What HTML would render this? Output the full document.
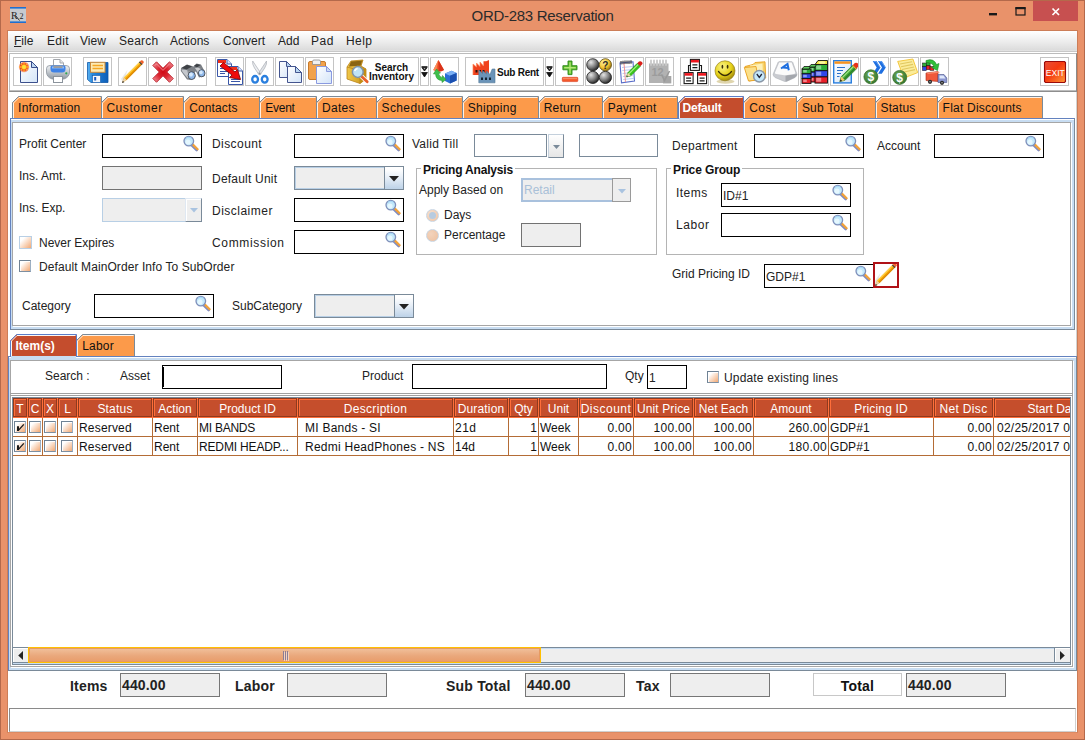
<!DOCTYPE html>
<html lang="en">
<head>
<meta charset="utf-8">
<title>ORD-283 Reservation</title>
<style>
*{box-sizing:border-box;margin:0;padding:0}
html,body{width:1085px;height:740px;overflow:hidden;background:#E9926A}
body{position:relative;font-family:"Liberation Sans",sans-serif;font-size:12px;color:#1a1a1a}
.abs,.abs>*{position:absolute}
#win{position:absolute;left:0;top:0;width:1085px;height:740px;background:#E9926A;border:1px solid #B4694B}
#title{left:0;top:6px;width:1085px;text-align:center;font-size:15px;letter-spacing:-.3px;color:#2b2b2b;white-space:nowrap;line-height:19px}
#appicon{left:10px;top:7px;width:16px;height:16px}
#wc{left:980px;top:1px;width:98px;height:20px}
#client{left:8px;top:31px;width:1069px;height:701px;background:#fff}
#menubar{left:8px;top:31px;width:1069px;height:21px;background:linear-gradient(#fff,#f8f8f8 20%,#ececec 55%,#dcdcdc 94%,#e6e6e6);border-bottom:1px solid #c8c8c8}
#menubar span{position:absolute;top:3px;font-size:12px;color:#222;white-space:nowrap}
#toolbar{left:9px;top:53px;width:1068px;height:39px;background:#fff;border:1px solid #bcbcbc;border-bottom:1px solid #8e8e8e;border-right:1px solid #8a8a8a;box-shadow:inset 0 -1px 0 #bdbdbd}
.tb{top:57px;width:29px;height:29px;border:1px solid #c4c4c4;background:#fff;overflow:hidden}
.tb svg{position:absolute;left:0;top:0}
.tbt{position:absolute;font-weight:bold;font-size:10px;line-height:9px;color:#111;white-space:nowrap}
.tab{white-space:nowrap}
.tab svg{position:absolute;left:0;top:0}
.tab b,.tab i{position:absolute;left:6px;top:5px;font-style:normal;font-weight:normal;font-size:12px;color:#111;letter-spacing:.2px}
.tab b{font-weight:bold;color:#fff;letter-spacing:-.1px}
.lbl{white-space:nowrap;font-size:12px;color:#222;line-height:14px}
.fld{background:#fff;border:1px solid #000;height:24px}
.ft{position:absolute;left:1px;top:5px;font-size:12px;color:#222;line-height:14px}
.dis{background:#eee;border:1px solid #727272;height:24px}
.inset{background:#fff;border:1px solid #8a8a8a;border-right-color:#d8d8d8;border-bottom-color:#d8d8d8}
.mag{position:absolute;right:2px;top:0;width:18px;height:18px}
.panel{border-style:solid;border-width:1px;border-color:#6382BF #7A8A99 #7A8A99 #6382BF;background:#C8DDF2}
.panel::before{content:"";position:absolute;left:0;right:0;top:0;height:1px;background:#fff}
.panel>div{position:absolute;left:1px;top:3px;right:3px;bottom:3px;background:#fff;border:1px solid #a6a6a6;box-shadow:1px 1px 0 #fff}
.cb{width:12px;height:12px;border:1px solid #6f8294;border-right-color:#9db0c4;border-bottom-color:#7d8fa1;background:linear-gradient(135deg,#fff 22%,#f2a873);box-shadow:inset 1px 1px 0 #fff}
.cb.soft{border-color:#b8cfe5;width:13px;height:13px;box-shadow:none}
.cb.tc{position:absolute;width:12px;height:12px;overflow:hidden}
.cb.tc svg{position:absolute;left:0;top:0}
.combo{border:1px solid #7A8A99;background:#eee;box-shadow:inset 0 0 0 1px #b8cfe5}
.combo.off{border:2px solid #a9c1dd;border-right-width:0;box-shadow:none}
.cbtn{position:absolute;right:0;top:0;bottom:0;width:19px;border-left:1px solid #7A8A99;background:linear-gradient(#fff 10%,#e9f0f8 45%,#bdd2e8)}
.combo.off .cbtn{top:-2px;bottom:-2px;border:1px solid #9a9a9a;width:19px;background:#eee}
.ct{position:absolute;left:1px;top:3px;color:#a9c0d8;font-size:12px;line-height:14px}
.grp{border:1px solid #b4b4b4;box-shadow:inset 1px 1px 0 #fff,1px 1px 0 #fff}
.gt{font-weight:bold;font-size:12px;line-height:14px;background:#fff;padding:0 2px;white-space:nowrap;color:#111}
.radio{width:13px;height:13px;border-radius:50%;border:1px solid #c9d6e4;background:radial-gradient(circle at 35% 35%,#f7e0cf,#eec3a3)}
.radio .dot{position:absolute;left:2px;top:2px;width:7px;height:7px;border-radius:50%;background:#b7cbe0}
.radio.r2{background:radial-gradient(circle at 35% 35%,#f3d3bc,#ecc0a0)}
.redbtn{width:26px;height:26px;border:2px solid #b01217;background:#fff;overflow:hidden}
.redbtn svg{position:absolute;left:-3px;top:-3px}
.sp{border:1px solid #7A8A99;background:#fff;overflow:hidden}
.thbg{background:#FF6E3A}
.th{height:19px;background:#C54E2C;border:1px solid #8F3A1E;box-shadow:inset 1px 1px 0 #FF6E3A;color:#fff;font-size:12px;line-height:21px;text-align:center;white-space:nowrap;overflow:hidden}
.tr{height:19px;border-bottom:1px solid #b46c36}
.td{height:19px;line-height:20px;font-size:12px;color:#111;white-space:nowrap;overflow:hidden;border-right:1px solid #b46c36;padding:0 1px}
.sbar{background:#eee;border-top:1px solid #7A8A99;border-bottom:1px solid #c8ddf2;box-shadow:inset 0 -1px 0 #7A8A99,inset 0 1px 0 #c8ddf2}
.sbtn{top:0;width:15px;height:14px;background:#eee;box-shadow:inset 1px 1px 0 #fff}
.sbtn.r{border-left:1px solid #7A8A99;width:16px}
.thumb{top:-1px;height:16px;border:1px solid #FFC000;background:linear-gradient(#f1c29d,#eaa87c 55%,#e89c6a);box-shadow:inset 0 0 0 1px #e79a62}
.blbl{font-weight:bold;font-size:14px;color:#222;white-space:nowrap;line-height:16px;letter-spacing:.2px}
.bf{background:#eee;border:1px solid #767676;height:24px;font-weight:bold;font-size:14px;line-height:22px;padding-left:1px;color:#222;letter-spacing:.15px}
.totl{border:1px solid #c8c8c8;background:#fff;font-weight:bold;font-size:14px;line-height:24px;letter-spacing:.2px;text-align:center;color:#111}
.status{border:1px solid #8a8a8a;border-right-color:#d0d0d0;border-bottom-color:#d0d0d0;background:#fff}
.vt{background:#fff;border:1px solid #7A8A99;box-shadow:inset 1px 1px 0 #fff,1px 1px 0 #fff}
.vtb{border:1px solid #c4d0dc;border-right-color:#7A8A99;border-bottom-color:#7A8A99;background:linear-gradient(#fff,#f2f2f2 50%,#e6e6e6)}
.caret{width:1px;background:#000}
#frame{left:7px;top:30px;width:1071px;height:703px;border:1px solid #cc7d57;border-bottom-color:#dd8a62}
.vline{width:1px;background:#d2d2d2}
.combo.off.v2{border:1px solid #b8cfe5}
.combo.off.v2 .cbtn{top:-1px;bottom:-1px;right:-1px;width:17px;border:1px solid #dfe8f2;border-right-color:#7A8A99;border-bottom-color:#7A8A99;background:#eee;box-shadow:inset 1px 1px 0 #fff}
.combo.off.v2 .cbtn svg{margin:-1px 0 0 -1px}
</style>
</head>
<body>
<div id="win"></div>
<svg width="0" height="0" style="position:absolute"><defs><linearGradient id="gpg" x1="0" y1="0" x2="1" y2="1"><stop offset="0" stop-color="#fff"/><stop offset="1" stop-color="#d3e4f8"/></linearGradient><linearGradient id="gex" x1="0" y1="0" x2="1" y2="1"><stop offset="0" stop-color="#e8503a"/><stop offset=".45" stop-color="#F53A10"/><stop offset="1" stop-color="#FF9A38"/></linearGradient><radialGradient id="gball" cx=".35" cy=".3" r=".75"><stop offset="0" stop-color="#e6e6e6"/><stop offset=".55" stop-color="#808080"/><stop offset="1" stop-color="#1c1c1c"/></radialGradient><radialGradient id="gyb" cx=".35" cy=".3" r=".75"><stop offset="0" stop-color="#fff3a0"/><stop offset=".6" stop-color="#F2C12E"/><stop offset="1" stop-color="#8a6a10"/></radialGradient><radialGradient id="gsm" cx=".38" cy=".3" r=".8"><stop offset="0" stop-color="#fbf58a"/><stop offset=".55" stop-color="#E6D21A"/><stop offset="1" stop-color="#8e7408"/></radialGradient><radialGradient id="gdl" cx=".4" cy=".35" r=".7"><stop offset="0" stop-color="#6aa85a"/><stop offset="1" stop-color="#35752c"/></radialGradient><linearGradient id="gfl" x1="0" y1="0" x2="1" y2="0"><stop offset="0" stop-color="#5db4f2"/><stop offset=".25" stop-color="#2386dc"/><stop offset="1" stop-color="#0f5fb8"/></linearGradient><linearGradient id="gpr" x1="0" y1="0" x2="0" y2="1"><stop offset="0" stop-color="#f2f4f6"/><stop offset="1" stop-color="#8f98a2"/></linearGradient><radialGradient id="grx" cx=".5" cy=".5" r=".6"><stop offset="0" stop-color="#cf0a15"/><stop offset=".45" stop-color="#dc2530"/><stop offset="1" stop-color="#f08088"/></radialGradient><linearGradient id="gbx" x1="0" y1="0" x2="1" y2="0"><stop offset="0" stop-color="#f0c84a"/><stop offset="1" stop-color="#c48f14"/></linearGradient></defs></svg>
<div class="abs">
<div id="appicon"><svg width="16" height="16" viewBox="0 0 16 16"><rect width="16" height="16" fill="#c6cad0"/><rect width="16" height="1.6" fill="#1f6fd0"/><rect y="14.4" width="16" height="1.6" fill="#1f6fd0"/><text x="1" y="11.5" font-family="Liberation Serif, serif" font-size="10" fill="#222">R</text><path d="M5.5 8.5L9.5 13.5" stroke="#222" stroke-width=".9"/><text x="9.5" y="12" font-family="Liberation Serif, serif" font-size="8" fill="#222">2</text></svg></div>
<div id="title">ORD-283 Reservation</div>
<div id="wc"><svg width="98" height="20" viewBox="0 0 98 20"><rect x="53" y="0" width="45" height="20" fill="#C75050"/><rect x="9" y="12" width="8" height="2.4" fill="#1a1a1a"/><rect x="36" y="7" width="9" height="7" fill="none" stroke="#1a1a1a" stroke-width="1.2"/><rect x="35.4" y="6" width="10.2" height="2.2" fill="#1a1a1a"/><path d="M72.5 7.5L79 14M79 7.5L72.5 14" stroke="#fff" stroke-width="1.7"/></svg></div>
<div id="frame"></div>
<div id="client"></div>
<div class="vline" style="left:1076px;top:92px;height:264px"></div>
<div id="menubar" class="abs">
<span style="left:6px"><u>F</u>ile</span><span style="left:39px;letter-spacing:.3px">Edit</span><span style="left:72px">View</span><span style="left:111px;letter-spacing:.25px">Search</span><span style="left:162px">Actions</span><span style="left:215px">Convert</span><span style="left:270px">Add</span><span style="left:303px;letter-spacing:.5px">Pad</span><span style="left:338px;letter-spacing:.4px">Help</span>
</div>
<div id="toolbar"></div>
<div class="tb" style="left:13px"><svg width="27" height="27" viewBox="0 0 27 27"><path d="M6.5 3.5H17.5L23.5 9.5V24.5H6.5Z" fill="url(#gpg)" stroke="#3a4f8c"/><path d="M17.5 3.5V9.5H23.5Z" fill="#bcd6f2" stroke="#3a4f8c" stroke-linejoin="round"/><circle cx="10" cy="9" r="5.2" fill="#F0502A" opacity=".55"/><circle cx="10" cy="9" r="3.9" fill="#F4421E"/><path d="M10 4.2V13.8M5.2 9H14.8M6.6 5.6L13.4 12.4M13.4 5.6L6.6 12.4" stroke="#FFB020" stroke-width="1.3"/><circle cx="10" cy="9" r="2" fill="#FFE23A"/></svg></div>
<div class="tb" style="left:43px"><svg width="27" height="27" viewBox="0 0 27 27"><path d="M9.5 1.5H16L19.5 5V10H9.5Z" fill="#fff" stroke="#a3a7ac"/><path d="M16 1.5V5H19.5" fill="#e4e6e8" stroke="#a3a7ac"/><path d="M2.5 10.5Q2.5 7.5 6 7.5H22Q25.5 7.5 25.5 10.5V14Q25.5 19 20 21H8Q2.5 19 2.5 14Z" fill="url(#gpr)" stroke="#8b939c" stroke-width=".8"/><path d="M6.5 9Q6.5 7.5 8 7.5H20Q21.5 7.5 21.5 9V11Q21.5 14.5 18 14.5H10Q6.5 14.5 6.5 11Z" fill="#3f82e6"/><path d="M8 8.5H20V10.5H8Z" fill="#8ebcf5"/><path d="M9.5 8H18.5V10H9.5Z" fill="#9a9ca0"/><rect x="9.5" y="18.5" width="9" height="6" fill="#fff" stroke="#8b939c"/><circle cx="22.3" cy="15.3" r="1.1" fill="#2fa84f"/></svg></div>
<div class="tb" style="left:83px"><svg width="27" height="27" viewBox="0 0 27 27"><path d="M3.5 4.5H24V24.5H7L3.5 21.5Z" fill="url(#gfl)" stroke="#0f58a8" stroke-width=".8"/><rect x="6.5" y="4.3" width="14.5" height="10" fill="#fdeab4" stroke="#c9893a"/><path d="M8.5 7.5H19M8.5 10.5H19" stroke="#f5a623" stroke-width="1.6"/><rect x="8.5" y="17.5" width="8" height="7" fill="#f4f7fb" stroke="#0f58a8" stroke-width=".6"/><rect x="10.2" y="19" width="2" height="3.5" fill="#1558c0"/></svg></div>
<div class="tb" style="left:118px"><svg width="27" height="27" viewBox="0 0 27 27"><path d="M2 21L8.5 12L4.5 25Z" fill="#ddd" opacity=".7"/><path d="M3 25L5 19.4L20.9 3.5L23.5 6.1L7.6 22Z" fill="#F5A300"/><path d="M5 19.4L20.9 3.5L21.8 4.4L5.9 20.3Z" fill="#FFD24A"/><path d="M6.8 21.2L22.7 5.3L23.5 6.1L7.6 22Z" fill="#D8860A"/><path d="M3 25L5 19.4L7.6 22Z" fill="#EBD2A8"/><path d="M3 25L3.8 22.7L5.3 24.2Z" fill="#333"/><path d="M19.9 4.5L20.9 3.5L23.5 6.1L22.5 7.1Z" fill="#444"/><path d="M20.9 3.5L21.9 2.5Q23.1 1.8 24.2 2.9Q25.3 4 24.5 5.1L23.5 6.1Z" fill="#F2602A"/></svg></div>
<div class="tb" style="left:148px"><svg width="27" height="27" viewBox="0 0 27 27"><path d="M3.8 7.5L7.5 3.8L14 10.3L20.5 3.8L24.3 7.5L17.8 14L24.3 20.5L20.5 24.3L14 17.8L7.5 24.3L3.8 20.5L10.3 14Z" fill="url(#grx)" stroke="#b8232b" stroke-width=".9" stroke-linejoin="round"/><path d="M5.8 7.6L7.5 5.9L14 12.4L20.5 5.9" stroke="#f59aa0" stroke-width="1" fill="none" opacity=".8"/></svg></div>
<div class="tb" style="left:178px"><svg width="27" height="27" viewBox="0 0 27 27"><path d="M2 10L8 6.5L14.5 8.5L17.5 5.5L22 6.5L26 14L25.5 18L20 19.5L17 13.5L15.5 14L16.5 19L12.5 22L8 21.5L1.8 13Z" fill="#7c8086"/><path d="M2.5 10L8 6.8L13 8.5L7.5 11.5Z" fill="#3e4146"/><path d="M15 7.8L17.8 6L21.5 7L18 9.5Z" fill="#3e4146"/><path d="M2.5 11.5L7.5 12L13 15L9 20.5L3.5 14Z" fill="#c4c7cc"/><path d="M16 10L19 9.5L24.5 12.5L20.5 17Z" fill="#caccd0"/><path d="M8 12L13 15L10 19Z" fill="#8e9298"/><ellipse cx="12.7" cy="17.6" rx="3.6" ry="3.9" fill="#8fb8ea" stroke="#484c52" stroke-width=".9"/><ellipse cx="22.7" cy="15.2" rx="3.3" ry="3.6" fill="#8fb8ea" stroke="#484c52" stroke-width=".9"/><ellipse cx="12" cy="16.6" rx="1.9" ry="2.1" fill="#d4e8fb"/><ellipse cx="22" cy="14.3" rx="1.7" ry="1.9" fill="#d4e8fb"/></svg></div>
<div class="tb" style="left:215px"><svg width="27" height="27" viewBox="0 0 27 27"><path d="M1.5 1.5H11L15.5 6V18.5H1.5Z" fill="#fff" stroke="#3a57a8"/><rect x="2" y="2" width="8" height="3" fill="#F0301A"/><path d="M11 1.5V6H15.5" fill="#dbe6f8" stroke="#3a57a8"/><path d="M4 10.5H13M4 13.5H13M4 15.5H9" stroke="#3a57a8"/><path d="M12.5 8.5H22L26.5 13V26.5H12.5Z" fill="#fff" stroke="#3a57a8"/><rect x="13" y="9" width="8" height="3" fill="#F0301A"/><path d="M22 8.5V13H26.5" fill="#dbe6f8" stroke="#3a57a8"/><path d="M15 18.5H24M15 21.5H24M15 23.5H24" stroke="#3a57a8"/><path d="M4 8L7.5 4.5L19 14L21.5 11.5L24.5 21.5L13.5 19.5L16 17Z" fill="#F00A0A" stroke="#7d0b10" stroke-width=".9" stroke-linejoin="round"/></svg></div>
<div class="tb" style="left:245px"><svg width="27" height="27" viewBox="0 0 27 27"><path d="M6.7 3Q6 6 8.5 10L13.2 17L15 15.5Z" fill="#eceef1" stroke="#a9aeb5" stroke-width=".7"/><path d="M20.5 3Q21.2 6 18.7 10L14 17L12.3 15.5Z" fill="#dfe2e6" stroke="#a9aeb5" stroke-width=".7"/><circle cx="13.7" cy="15.5" r=".9" fill="#8a8f96"/><ellipse cx="9.1" cy="21.3" rx="2.9" ry="3.3" fill="#fff" stroke="#2a7fde" stroke-width="2.3"/><ellipse cx="18.7" cy="21.3" rx="2.9" ry="3.3" fill="#fff" stroke="#2a7fde" stroke-width="2.3"/></svg></div>
<div class="tb" style="left:275px"><svg width="27" height="27" viewBox="0 0 27 27"><path d="M3.5 3.5H10.5L15.5 8.5V19.5H3.5Z" fill="url(#gpg)" stroke="#44558f"/><path d="M10.5 3.5V8.5H15.5Z" fill="#b9d7f3" stroke="#44558f" stroke-linejoin="round"/><path d="M11.5 8.5H19.5L25.5 14.5V24.5H11.5Z" fill="url(#gpg)" stroke="#44558f"/><path d="M19.5 8.5V14.5H25.5Z" fill="#b9d7f3" stroke="#44558f" stroke-linejoin="round"/></svg></div>
<div class="tb" style="left:305px"><svg width="27" height="27" viewBox="0 0 27 27"><rect x="2.5" y="3.5" width="17" height="18" rx="1.5" fill="#F2A24C" stroke="#C77A2A"/><path d="M6.5 6.5V3.5Q6.5 2 8 2H13Q14.5 2 14.5 3.5V6.5Z" fill="#f0f0f0" stroke="#8d8d8d" stroke-width=".8"/><path d="M10.5 8.5H20.5L25.5 13.5V25.5H10.5Z" fill="url(#gpg)" stroke="#8a9ae0"/><path d="M20.5 8.5V13.5H25.5Z" fill="#c9dcf6" stroke="#8a9ae0" stroke-linejoin="round"/></svg></div>
<div class="tb" style="left:430px"><svg width="27" height="27" viewBox="0 0 27 27"><path d="M7.4 2L13 12Q7.6 15 2.3 12Z" fill="#F25A2A"/><path d="M7.4 2L13 12Q10.3 13.6 7.6 13.6Z" fill="#D9321A"/><path d="M7.4 2L2.3 12Q3.5 12.8 5 13.2Z" fill="#F98A58"/><path d="M14 15.5L20.5 12.8L25.6 15V22.5L19 25.4L14 23Z" fill="#2a6fd6"/><path d="M14 15.5L20.5 12.8L25.6 15L19 17.8Z" fill="#7ab0f5"/><path d="M19 17.8V25.4L25.6 22.5V15Z" fill="#1a50b0"/><path d="M5.5 11L9.5 15L7.5 15.5Q8.5 19.5 11.5 19.5V17.5L15 21.5L11 24.5V22.5Q5 22.5 4.5 15.8L2.5 16Z" fill="#3FC04A" stroke="#279532" stroke-width=".6" stroke-linejoin="round"/></svg></div>
<div class="tb" style="left:555px"><svg width="27" height="27" viewBox="0 0 27 27"><path d="M12 3H16V7.7H21V11.8H16V16.6H12V11.8H6.9V7.7H12Z" fill="#58b82a" stroke="#2f8a1b" stroke-width=".9"/><path d="M13.3 4.2H14.7V9H19.8V10.5H14.7V15.4H13.3V10.5H8.2V9H13.3Z" fill="#b4e878"/><rect x="6.3" y="19.3" width="15.5" height="4.3" rx=".8" fill="#F4572A" stroke="#d83a1a" stroke-width=".6"/><rect x="7" y="19.8" width="14" height="1.4" fill="#f98a62"/></svg></div>
<div class="tb" style="left:585px"><svg width="27" height="27" viewBox="0 0 27 27"><circle cx="6.8" cy="6.8" r="6.1" fill="url(#gball)" stroke="#1a1a1a" stroke-width=".8"/><circle cx="6.8" cy="19.4" r="6.1" fill="url(#gball)" stroke="#1a1a1a" stroke-width=".8"/><circle cx="19.4" cy="19.4" r="6.1" fill="url(#gball)" stroke="#1a1a1a" stroke-width=".8"/><circle cx="19.4" cy="6.8" r="6.1" fill="url(#gyb)" stroke="#5a4608" stroke-width=".8"/><text x="19.4" y="10.5" text-anchor="middle" font-family="Liberation Sans, sans-serif" font-weight="bold" font-size="10" fill="#2a2a2a">?</text></svg></div>
<div class="tb" style="left:615px"><svg width="27" height="27" viewBox="0 0 27 27"><path d="M4 5L17 3.8L18.5 23L5.5 24.8Z" fill="#fff" stroke="#5a6ec8" stroke-width="1.1"/><path d="M6 9.5L17 8.5M6.3 12.5L17.3 11.5M6.6 15.5L17.6 14.5M6.9 18.5L17.9 17.5M7.2 21.5L18 20.4" stroke="#b4c4f0" stroke-width=".9"/><path d="M8 5L9.5 24" stroke="#f08a8a" stroke-width=".9"/><path d="M5 3V6.5M7 2.8V6.3M9 2.6V6.1M11 2.5V6M13 2.4V5.9M15 2.3V5.8" stroke="#333" stroke-width="1.1"/><path d="M10.5 19L11.8 14.8L21.3 5.3L24.3 8.3L14.8 17.8Z" fill="#3ac81a" stroke="#1f8a10" stroke-width=".7"/><path d="M12.8 15.8L22.3 6.3" stroke="#a8f088" stroke-width="1.2"/><path d="M21.3 5.3L23 3.6Q24.6 2.6 25.9 3.9Q27.2 5.2 26 6.6L24.3 8.3Z" fill="#d8201a"/><path d="M10.5 19L11.8 14.8L14.8 17.8Z" fill="#F2D9A8"/><path d="M10.5 19L11 17.3L12.2 18.5Z" fill="#333"/></svg></div>
<div class="tb" style="left:645px"><svg width="27" height="27" viewBox="0 0 27 27"><path d="M3 5.5H22.5V22L19 25H3Z" fill="#b2b2b2"/><path d="M17 18H25.3V25.4H17Z" fill="#a6a6a6"/><path d="M5 2.5V7M8 2.5V7M11 2.5V7M14 2.5V7M17 2.5V7M20 2.5V7" stroke="#c9c9c9" stroke-width="1.8" stroke-linecap="round"/><text x="11.5" y="18" text-anchor="middle" font-family="Liberation Sans, sans-serif" font-weight="bold" font-size="11" fill="#9c9c9c">12</text><path d="M15.5 16.5L18.5 22.5L23.5 13" fill="none" stroke="#999" stroke-width="1.6"/></svg></div>
<div class="tb" style="left:680px"><svg width="27" height="27" viewBox="0 0 27 27"><path d="M9.5 7.5H7.5V14.5M18.5 7.5H20.5V14.5" fill="none" stroke="#1a1a1a" stroke-width="1.1"/><rect x="9.4" y="1.4" width="9" height="11" fill="#fff" stroke="#1a1a1a" stroke-width="1.1"/><rect x="9.9" y="1.9" width="8" height="2.6" fill="#F0141C"/><path d="M11.4 6.9H16.4M11.4 9.6H16.4" stroke="#1a1a1a" stroke-width="1.2"/><rect x="3.1" y="14.6" width="9" height="11" fill="#fff" stroke="#1a1a1a" stroke-width="1.1"/><rect x="3.6" y="15.1" width="8" height="2.6" fill="#F0141C"/><path d="M5.1 20.1H10.1M5.1 22.799999999999997H10.1" stroke="#1a1a1a" stroke-width="1.2"/><rect x="16.6" y="14.6" width="9" height="11" fill="#fff" stroke="#1a1a1a" stroke-width="1.1"/><rect x="17.1" y="15.1" width="8" height="2.6" fill="#F0141C"/><path d="M18.6 20.1H23.6M18.6 22.799999999999997H23.6" stroke="#1a1a1a" stroke-width="1.2"/></svg></div>
<div class="tb" style="left:710px"><svg width="27" height="27" viewBox="0 0 27 27"><ellipse cx="14.5" cy="23.5" rx="9" ry="2.2" fill="#b9a24a" opacity=".45"/><circle cx="14" cy="12.8" r="10" fill="url(#gsm)" stroke="#8a7408" stroke-width=".6"/><ellipse cx="11.4" cy="8.7" rx=".9" ry="2" fill="#3a2e06"/><ellipse cx="16.6" cy="8.7" rx=".9" ry="2" fill="#3a2e06"/><path d="M7.5 13.5Q14 21.5 20.5 13.5" fill="none" stroke="#3a2e06" stroke-width="1.3" stroke-linecap="round"/></svg></div>
<div class="tb" style="left:740px"><svg width="27" height="27" viewBox="0 0 27 27"><path d="M4 8.5L12 6.5L14 4.5L24 3.8L24.7 20L8 23Z" fill="#F7D268" stroke="#E8A020" stroke-width=".9" stroke-linejoin="round"/><path d="M9 7.5L21.5 5.5L22 19L10.5 21Z" fill="#fdf0b8"/><path d="M3.3 9.5L15 8.5L17.5 22L7.5 23Z" fill="#FBE08A" stroke="#E8A020" stroke-width=".9" stroke-linejoin="round"/><circle cx="18.3" cy="18.2" r="5.7" fill="#c4e8fb" stroke="#8a98a8" stroke-width="1.5"/><path d="M15.8 16L18.3 19.3L20.8 16" fill="none" stroke="#223" stroke-width="1.3"/></svg></div>
<div class="tb" style="left:770px"><svg width="27" height="27" viewBox="0 0 27 27"><path d="M2.100 16.200L7 4.500Q7.500 3.600 8.500 3.600H20.300Q21.300 3.600 21.800 4.500L26 16.200Q26 18 24 19.500L16 23.200Q14.500 23.800 13 23.200L4 19.500Q2.100 18 2.100 16.200Z" fill="#c9cbd0" stroke="#b0b3b9" stroke-width=".6"/><path d="M14.500 17.500L26 16.200Q26 18 24 19.500L16 23.200Q15 23.600 14.500 23.600Z" fill="#a4a7ad"/><path d="M8.200 4.600H20.600L24.300 14.500Q24.500 15.800 23 16L15 17.300Q14.200 17.400 13.400 17.300L5 16Q3.600 15.800 4 14.500Z" fill="#fbfbfb"/><path d="M10 10.500L16.500 6L17.800 12.300M12 9.600L17.300 10" fill="none" stroke="#1F6FE0" stroke-width="2"/></svg></div>
<div class="tb" style="left:800px"><svg width="27" height="27" viewBox="0 0 27 27"><rect x="8" y="9" width="8" height="5" fill="#2EAE3A" stroke="#111" stroke-width=".9"/><rect x="9.2" y="10" width="3.2" height="2.6" fill="#fff" opacity=".45"/><rect x="8" y="14" width="8" height="5" fill="#2F46E8" stroke="#111" stroke-width=".9"/><rect x="9.2" y="15" width="3.2" height="2.6" fill="#fff" opacity=".45"/><rect x="8" y="19" width="8" height="5" fill="#E8202A" stroke="#111" stroke-width=".9"/><rect x="9.2" y="20" width="3.2" height="2.6" fill="#fff" opacity=".45"/><rect x="1" y="11.0" width="9" height="4.8" fill="#2EAE3A" stroke="#111" stroke-width=".9"/><rect x="2.2" y="12.0" width="3.6" height="2.4" fill="#fff" opacity=".45"/><rect x="1" y="15.8" width="9" height="4.8" fill="#2F46E8" stroke="#111" stroke-width=".9"/><rect x="2.2" y="16.8" width="3.6" height="2.4" fill="#fff" opacity=".45"/><rect x="1" y="20.6" width="9" height="4.8" fill="#E8202A" stroke="#111" stroke-width=".9"/><rect x="2.2" y="21.6" width="3.6" height="2.4" fill="#fff" opacity=".45"/><rect x="14" y="6.5" width="12.5" height="6.2" fill="#2EAE3A" stroke="#111" stroke-width=".9"/><rect x="15.2" y="7.5" width="5.0" height="3.8000000000000003" fill="#fff" opacity=".45"/><rect x="14" y="12.7" width="12.5" height="6.2" fill="#2F46E8" stroke="#111" stroke-width=".9"/><rect x="15.2" y="13.7" width="5.0" height="3.8000000000000003" fill="#fff" opacity=".45"/><rect x="14" y="18.9" width="12.5" height="6.2" fill="#E8202A" stroke="#111" stroke-width=".9"/><rect x="15.2" y="19.9" width="5.0" height="3.8000000000000003" fill="#fff" opacity=".45"/><path d="M14 6.5L17 2.5H26.5V6.5Z" fill="#F0E23A" stroke="#111" stroke-width=".9"/><ellipse cx="21" cy="4.5" rx="3.5" ry="1.3" fill="#fbf7a8"/><path d="M1 11L3 8.5H10L8 11Z" fill="#5acc5a" stroke="#111" stroke-width=".8"/><path d="M8 9L10 6.5H15.5L14 9Z" fill="#5acc5a" stroke="#111" stroke-width=".8"/></svg></div>
<div class="tb" style="left:830px"><svg width="27" height="27" viewBox="0 0 27 27"><rect x="2.7" y="2.7" width="17.6" height="22.2" fill="url(#gpg)" stroke="#2a7fde" stroke-width="1.4"/><rect x="3.4" y="3.4" width="16.2" height="2.4" fill="#F7931E"/><path d="M6 9.5H14M6 12.5H12M6 15.5H10M6 18.5H8.5" stroke="#2a6fc8" stroke-width="1.1"/><path d="M8.8 23.6L10.3 18.6L22 6.9L25.7 10.6L14 22.3Z" fill="#3fae3a" stroke="#1f6a1c" stroke-width=".7"/><path d="M11.3 19.6L23 7.9" stroke="#a8e088" stroke-width="1.2"/><path d="M13 21.3L24.7 9.6" stroke="#2a7a26" stroke-width="1.2"/><path d="M8.8 23.6L10.3 18.6L14 22.3Z" fill="#F2C86a"/><path d="M8.8 23.6L9.5 21.3L11.2 22.9Z" fill="#222"/><path d="M21.2 7.7L22 6.9L25.7 10.6L24.9 11.4Z" fill="#F2A02A"/><path d="M22 6.9L23.8 5.1Q25.5 4 27 5.5Q28 7 27.2 8.5L25.7 10.6Z" fill="#E8301A"/></svg></div>
<div class="tb" style="left:860px"><svg width="27" height="27" viewBox="0 0 27 27"><path d="M11.7 3H15.5L19.5 9.4L15.5 15.8H11.7L15.7 9.4Z" fill="#1F6FE0"/><path d="M17 3H20.8L24.8 9.4L20.8 15.8H17L21 9.4Z" fill="#1F6FE0"/><path d="M12.6 3.5H15.2L19 9.4" stroke="#6aa8f8" stroke-width=".8" fill="none"/><path d="M17.9 3.5H20.5L24.3 9.4" stroke="#6aa8f8" stroke-width=".8" fill="none"/><circle cx="9.9" cy="18.8" r="7" fill="url(#gdl)" stroke="#2f6a27" stroke-width=".7"/><text x="9.9" y="23.1" text-anchor="middle" font-family="Liberation Sans, sans-serif" font-weight="bold" font-size="12" fill="#fff">$</text></svg></div>
<div class="tb" style="left:890px"><svg width="27" height="27" viewBox="0 0 27 27"><path d="M6.7 3.4L21.9 1L26.7 14.6L12.9 20Z" fill="#FBEC9A" stroke="#F2C230" stroke-width=".9" stroke-linejoin="round"/><path d="M9 6L21 3.8M10 8.8L22 6.4M11 11.5L23 9M12 14.2L24 11.6" stroke="#e0c860" stroke-width="1.1"/><circle cx="8.7" cy="19.4" r="7" fill="url(#gdl)" stroke="#2f6a27" stroke-width=".7"/><text x="8.7" y="23.7" text-anchor="middle" font-family="Liberation Sans, sans-serif" font-weight="bold" font-size="12" fill="#fff">$</text></svg></div>
<div class="tb" style="left:920px"><svg width="27" height="27" viewBox="0 0 27 27"><rect x="1.5" y="5" width="3.8" height="3.8" fill="#2EAE3A" stroke="#111" stroke-width=".5"/><rect x="5.3" y="4" width="3.8" height="3.8" fill="#2EAE3A" stroke="#111" stroke-width=".5"/><rect x="1.5" y="8.8" width="3.8" height="3.8" fill="#2F46E8" stroke="#111" stroke-width=".5"/><rect x="5.3" y="7.8" width="3.8" height="3.8" fill="#E8202A" stroke="#111" stroke-width=".5"/><rect x="9" y="8.5" width="3.8" height="3.8" fill="#E8202A" stroke="#111" stroke-width=".5"/><ellipse cx="9" cy="3.5" rx="3" ry="1.3" fill="#F0E23A" stroke="#111" stroke-width=".5"/><path d="M5 2.5Q13 0 15.5 6.5L18 5.5L16.5 12.5L10.5 9.5L13 8.5Q11.5 4.5 5 4.5Z" fill="#2fc03a" stroke="#1f8a28" stroke-width=".6" stroke-linejoin="round"/><path d="M5 15L17 13.5V23.5L5 22.5Z" fill="#F0583A" stroke="#a82a18" stroke-width=".6"/><path d="M5 15L17 13.5L19 14.5L7.5 16Z" fill="#f98a6a"/><path d="M17 16.5H23L25.8 20V24.5H17Z" fill="#8a96d0" stroke="#4a5288" stroke-width=".6"/><path d="M18.5 17.5H22.5L24.5 20.5H18.5Z" fill="#dfe8fa"/><circle cx="9" cy="23.8" r="2.1" fill="#2a2a2a"/><circle cx="21" cy="24.8" r="2.1" fill="#2a2a2a"/><circle cx="9" cy="23.8" r=".8" fill="#aaa"/><circle cx="21" cy="24.8" r=".8" fill="#aaa"/></svg></div>
<div class="tb" style="left:1040px"><svg width="27" height="27" viewBox="0 0 27 27"><path d="M4.5 3.5H23.5L24.5 4.5V23.5L23.5 24.5H4.5L3.5 23.5V4.5Z" fill="url(#gex)" stroke="#9a0a0a" stroke-width="1.1"/><text x="14.3" y="17.9" text-anchor="middle" font-family="Liberation Sans, sans-serif" font-size="9.5" fill="#fff" textLength="19" lengthAdjust="spacingAndGlyphs">EXIT</text></svg></div>
<div class="tb" style="left:340px;width:79px"><svg width="29" height="27" viewBox="0 0 29 27"><path d="M6 9L10 3L22 2L20 8L25 11V21L19 25.5L6 21Z" fill="url(#gbx)" stroke="#b98218" stroke-width=".8" stroke-linejoin="round"/><path d="M6 9L19 12.5L25 11" fill="none" stroke="#b98218" stroke-width=".8"/><path d="M19 12.5V25.5" stroke="#b98218" stroke-width=".8"/><path d="M10 3.5L21 2.7L19.5 7.5L8 8.5Z" fill="#8a6412"/><path d="M19 12.5L25 11V21L19 25.5Z" fill="#c48f14"/><path d="M20.6 18.4L26.4 24" stroke="#fff" stroke-width="4.4" stroke-linecap="round"/><path d="M20.6 18.4L26.2 23.8" stroke="#E8602A" stroke-width="2.8" stroke-linecap="round"/><circle cx="16.8" cy="14" r="5.4" fill="#BFE3F7" stroke="#7f93a8" stroke-width="1.5"/><path d="M13.7 13A3.5 3.5 0 0 1 16.6 10.4" stroke="#fff" stroke-width="1.5" fill="none"/></svg><span class="tbt" style="left:27px;top:5px;width:47px;text-align:center">Search<br>Inventory</span></div>
<div class="tb" style="left:420px;width:9px"><svg width="7" height="27" viewBox="0 0 7 27"><path d="M0.5 8.5H6.5M0.8 9.5H6.2L3.5 13Z M0.6 14.5H6.4L3.5 19Z" fill="#111" stroke="#111" stroke-width=".8"/><path d="M2.5 10.2H4.5L3.5 11.6Z" fill="#ddd"/></svg></div>
<div class="tb" style="left:465px;width:79px"><svg width="30" height="27" viewBox="0 0 30 27"><path d="M7 17V6L10.5 9V5L14 8.5V4L17.5 8V3.2H20.2L23 2V17Z" fill="#F0421E"/><path d="M7 17V6L10.5 9V5L14 8.5V4L17.5 8" fill="none" stroke="#ff8a5a" stroke-width=".7"/><path d="M9.5 12H11.5V14.5H9.5ZM13 12H15V14.5H13ZM16.5 12H18.5V14.5H16.5Z" fill="#301008"/><path d="M12.8 24.8V12L16.5 15.5V12.5L20.5 16V13L24 16.5L26.2 11H29V24.8Z" fill="#6a93b8" stroke="#4f7596" stroke-width=".6"/><path d="M15 19.5H17V22H15ZM19 19.5H21V22H19ZM23 19.5H25V22H23Z" fill="#142434"/></svg><span class="tbt" style="left:31px;top:10px;letter-spacing:-.25px">Sub Rent</span></div>
<div class="tb" style="left:545px;width:9px"><svg width="7" height="27" viewBox="0 0 7 27"><path d="M0.5 8.5H6.5M0.8 9.5H6.2L3.5 13Z M0.6 14.5H6.4L3.5 19Z" fill="#111" stroke="#111" stroke-width=".8"/><path d="M2.5 10.2H4.5L3.5 11.6Z" fill="#ddd"/></svg></div>
<div class="panel abs" style="left:10px;top:118px;width:1065px;height:212px"><div></div></div>
<div class="lbl" style="left:19px;top:137px">Profit Center</div>
<div class="fld" style="left:102px;top:134px;width:100px;height:24px"><svg class="mag" viewBox="0 0 18 18"><path d="M10.8 10.3L15.7 15.2" stroke="#7f8cc2" stroke-width="2.6" stroke-linecap="round"/><path d="M11.9 9.6L16.6 14.3" stroke="#F2A23A" stroke-width="2.2" stroke-linecap="round"/><circle cx="7.8" cy="6.1" r="4.8" fill="#c2e8fa" stroke="#7f90bb" stroke-width="1.3"/><circle cx="7" cy="7" r="2.6" fill="#eefaff" opacity=".8"/><path d="M5 3.4A4 4 0 0 1 10.8 3.6" stroke="#a5d6f5" stroke-width="1.2" fill="none"/></svg></div>
<div class="lbl" style="left:19px;top:169px;letter-spacing:0.007px">Ins. Amt.</div>
<div class="dis" style="left:102px;top:166px;width:100px;height:24px"></div>
<div class="lbl" style="left:19px;top:201px;letter-spacing:-0.036px">Ins. Exp.</div>
<div class="combo off v2" style="left:102px;top:198px;width:100px;height:24px"><div class="cbtn"><svg width="8" height="5" viewBox="0 0 8 5" style="position:absolute;left:5px;top:10px"><path d="M0 0H8L4 4.5Z" fill="#a9c3e0"/></svg></div></div>
<div class="cb soft" style="left:19px;top:236px"></div>
<div class="lbl" style="left:39px;top:236px">Never Expires</div>
<div class="cb " style="left:19px;top:260px"></div>
<div class="lbl" style="left:39px;top:260px;letter-spacing:0.086px">Default MainOrder Info To SubOrder</div>
<div class="lbl" style="left:22px;top:299px">Category</div>
<div class="fld" style="left:94px;top:294px;width:120px;height:24px"><svg class="mag" viewBox="0 0 18 18"><path d="M10.8 10.3L15.7 15.2" stroke="#7f8cc2" stroke-width="2.6" stroke-linecap="round"/><path d="M11.9 9.6L16.6 14.3" stroke="#F2A23A" stroke-width="2.2" stroke-linecap="round"/><circle cx="7.8" cy="6.1" r="4.8" fill="#c2e8fa" stroke="#7f90bb" stroke-width="1.3"/><circle cx="7" cy="7" r="2.6" fill="#eefaff" opacity=".8"/><path d="M5 3.4A4 4 0 0 1 10.8 3.6" stroke="#a5d6f5" stroke-width="1.2" fill="none"/></svg></div>
<div class="lbl" style="left:212px;top:137px;letter-spacing:0.430px">Discount</div>
<div class="fld" style="left:294px;top:134px;width:110px;height:24px"><svg class="mag" viewBox="0 0 18 18"><path d="M10.8 10.3L15.7 15.2" stroke="#7f8cc2" stroke-width="2.6" stroke-linecap="round"/><path d="M11.9 9.6L16.6 14.3" stroke="#F2A23A" stroke-width="2.2" stroke-linecap="round"/><circle cx="7.8" cy="6.1" r="4.8" fill="#c2e8fa" stroke="#7f90bb" stroke-width="1.3"/><circle cx="7" cy="7" r="2.6" fill="#eefaff" opacity=".8"/><path d="M5 3.4A4 4 0 0 1 10.8 3.6" stroke="#a5d6f5" stroke-width="1.2" fill="none"/></svg></div>
<div class="lbl" style="left:212px;top:172px;letter-spacing:0.210px">Default Unit</div>
<div class="combo" style="left:294px;top:166px;width:110px;height:24px"><div class="cbtn"><svg width="10" height="6" viewBox="0 0 10 6" style="position:absolute;left:4px;top:9px"><path d="M0 0H10L5 5.5Z" fill="#222"/></svg></div></div>
<div class="lbl" style="left:212px;top:204px;letter-spacing:0.488px">Disclaimer</div>
<div class="fld" style="left:294px;top:198px;width:110px;height:24px"><svg class="mag" viewBox="0 0 18 18"><path d="M10.8 10.3L15.7 15.2" stroke="#7f8cc2" stroke-width="2.6" stroke-linecap="round"/><path d="M11.9 9.6L16.6 14.3" stroke="#F2A23A" stroke-width="2.2" stroke-linecap="round"/><circle cx="7.8" cy="6.1" r="4.8" fill="#c2e8fa" stroke="#7f90bb" stroke-width="1.3"/><circle cx="7" cy="7" r="2.6" fill="#eefaff" opacity=".8"/><path d="M5 3.4A4 4 0 0 1 10.8 3.6" stroke="#a5d6f5" stroke-width="1.2" fill="none"/></svg></div>
<div class="lbl" style="left:212px;top:236px;letter-spacing:0.665px">Commission</div>
<div class="fld" style="left:294px;top:230px;width:110px;height:24px"><svg class="mag" viewBox="0 0 18 18"><path d="M10.8 10.3L15.7 15.2" stroke="#7f8cc2" stroke-width="2.6" stroke-linecap="round"/><path d="M11.9 9.6L16.6 14.3" stroke="#F2A23A" stroke-width="2.2" stroke-linecap="round"/><circle cx="7.8" cy="6.1" r="4.8" fill="#c2e8fa" stroke="#7f90bb" stroke-width="1.3"/><circle cx="7" cy="7" r="2.6" fill="#eefaff" opacity=".8"/><path d="M5 3.4A4 4 0 0 1 10.8 3.6" stroke="#a5d6f5" stroke-width="1.2" fill="none"/></svg></div>
<div class="lbl" style="left:232px;top:299px">SubCategory</div>
<div class="combo" style="left:314px;top:294px;width:100px;height:24px"><div class="cbtn"><svg width="10" height="6" viewBox="0 0 10 6" style="position:absolute;left:4px;top:9px"><path d="M0 0H10L5 5.5Z" fill="#222"/></svg></div></div>
<div class="lbl" style="left:412px;top:137px;letter-spacing:0.254px">Valid Till</div>
<div class="vt" style="left:474px;top:134px;width:73px;height:23px"></div>
<div class="vtb" style="left:548px;top:134px;width:16px;height:24px"><svg width="7" height="4" viewBox="0 0 7 4" style="position:absolute;left:4px;top:10px"><path d="M0 0H7L3.5 4Z" fill="#7A8A99"/></svg></div>
<div class="vt" style="left:579px;top:134px;width:79px;height:23px"></div>
<div class="grp" style="left:416px;top:168px;width:241px;height:87px"></div>
<div class="gt" style="left:421px;top:163px;letter-spacing:-0.185px">Pricing Analysis</div>
<div class="lbl" style="left:419px;top:183px">Apply Based on</div>
<div class="combo off" style="left:521px;top:178px;width:110px;height:24px"><span class="ct">Retail</span><div class="cbtn"><svg width="8" height="5" viewBox="0 0 8 5" style="position:absolute;left:5px;top:10px"><path d="M0 0H8L4 4.5Z" fill="#a9c3e0"/></svg></div></div>
<div class="radio" style="left:426px;top:209px"><div class="dot"></div></div>
<div class="lbl" style="left:444px;top:208px">Days</div>
<div class="radio r2" style="left:426px;top:229px"></div>
<div class="lbl" style="left:444px;top:228px">Percentage</div>
<div class="dis" style="left:521px;top:223px;width:60px;height:24px"></div>
<div class="lbl" style="left:672px;top:139px;letter-spacing:0.301px">Department</div>
<div class="fld" style="left:754px;top:134px;width:110px;height:24px"><svg class="mag" viewBox="0 0 18 18"><path d="M10.8 10.3L15.7 15.2" stroke="#7f8cc2" stroke-width="2.6" stroke-linecap="round"/><path d="M11.9 9.6L16.6 14.3" stroke="#F2A23A" stroke-width="2.2" stroke-linecap="round"/><circle cx="7.8" cy="6.1" r="4.8" fill="#c2e8fa" stroke="#7f90bb" stroke-width="1.3"/><circle cx="7" cy="7" r="2.6" fill="#eefaff" opacity=".8"/><path d="M5 3.4A4 4 0 0 1 10.8 3.6" stroke="#a5d6f5" stroke-width="1.2" fill="none"/></svg></div>
<div class="lbl" style="left:877px;top:139px">Account</div>
<div class="fld" style="left:934px;top:134px;width:110px;height:24px"><svg class="mag" viewBox="0 0 18 18"><path d="M10.8 10.3L15.7 15.2" stroke="#7f8cc2" stroke-width="2.6" stroke-linecap="round"/><path d="M11.9 9.6L16.6 14.3" stroke="#F2A23A" stroke-width="2.2" stroke-linecap="round"/><circle cx="7.8" cy="6.1" r="4.8" fill="#c2e8fa" stroke="#7f90bb" stroke-width="1.3"/><circle cx="7" cy="7" r="2.6" fill="#eefaff" opacity=".8"/><path d="M5 3.4A4 4 0 0 1 10.8 3.6" stroke="#a5d6f5" stroke-width="1.2" fill="none"/></svg></div>
<div class="grp" style="left:666px;top:168px;width:198px;height:87px"></div>
<div class="gt" style="left:671px;top:163px;letter-spacing:-0.128px">Price Group</div>
<div class="lbl" style="left:676px;top:186px;letter-spacing:0.466px">Items</div>
<div class="fld" style="left:721px;top:183px;width:130px;height:24px"><span class="ft">ID#1</span><svg class="mag" viewBox="0 0 18 18"><path d="M10.8 10.3L15.7 15.2" stroke="#7f8cc2" stroke-width="2.6" stroke-linecap="round"/><path d="M11.9 9.6L16.6 14.3" stroke="#F2A23A" stroke-width="2.2" stroke-linecap="round"/><circle cx="7.8" cy="6.1" r="4.8" fill="#c2e8fa" stroke="#7f90bb" stroke-width="1.3"/><circle cx="7" cy="7" r="2.6" fill="#eefaff" opacity=".8"/><path d="M5 3.4A4 4 0 0 1 10.8 3.6" stroke="#a5d6f5" stroke-width="1.2" fill="none"/></svg></div>
<div class="lbl" style="left:676px;top:218px;letter-spacing:0.577px">Labor</div>
<div class="fld" style="left:721px;top:213px;width:130px;height:24px"><svg class="mag" viewBox="0 0 18 18"><path d="M10.8 10.3L15.7 15.2" stroke="#7f8cc2" stroke-width="2.6" stroke-linecap="round"/><path d="M11.9 9.6L16.6 14.3" stroke="#F2A23A" stroke-width="2.2" stroke-linecap="round"/><circle cx="7.8" cy="6.1" r="4.8" fill="#c2e8fa" stroke="#7f90bb" stroke-width="1.3"/><circle cx="7" cy="7" r="2.6" fill="#eefaff" opacity=".8"/><path d="M5 3.4A4 4 0 0 1 10.8 3.6" stroke="#a5d6f5" stroke-width="1.2" fill="none"/></svg></div>
<div class="lbl" style="left:672px;top:267px">Grid Pricing ID</div>
<div class="fld" style="left:764px;top:264px;width:110px;height:24px"><span class="ft">GDP#1</span><svg class="mag" viewBox="0 0 18 18"><path d="M10.8 10.3L15.7 15.2" stroke="#7f8cc2" stroke-width="2.6" stroke-linecap="round"/><path d="M11.9 9.6L16.6 14.3" stroke="#F2A23A" stroke-width="2.2" stroke-linecap="round"/><circle cx="7.8" cy="6.1" r="4.8" fill="#c2e8fa" stroke="#7f90bb" stroke-width="1.3"/><circle cx="7" cy="7" r="2.6" fill="#eefaff" opacity=".8"/><path d="M5 3.4A4 4 0 0 1 10.8 3.6" stroke="#a5d6f5" stroke-width="1.2" fill="none"/></svg></div>
<div class="redbtn" style="left:873px;top:262px"><svg width="27" height="27" viewBox="0 0 27 27"><path d="M2 21L8.5 12L4.5 25Z" fill="#ddd" opacity=".7"/><path d="M3 25L5 19.4L20.9 3.5L23.5 6.1L7.6 22Z" fill="#F5A300"/><path d="M5 19.4L20.9 3.5L21.8 4.4L5.9 20.3Z" fill="#FFD24A"/><path d="M6.8 21.2L22.7 5.3L23.5 6.1L7.6 22Z" fill="#D8860A"/><path d="M3 25L5 19.4L7.6 22Z" fill="#EBD2A8"/><path d="M3 25L3.8 22.7L5.3 24.2Z" fill="#333"/><path d="M19.9 4.5L20.9 3.5L23.5 6.1L22.5 7.1Z" fill="#444"/><path d="M20.9 3.5L21.9 2.5Q23.1 1.8 24.2 2.9Q25.3 4 24.5 5.1L23.5 6.1Z" fill="#F2602A"/></svg></div>
<div class="tab abs" style="left:12px;top:96px;width:90px;height:22px"><svg width="90" height="22" viewBox="0 0 90 22"><path d="M0.5 22 V6.5 L6.5 0.5 H89.5 V22" fill="#FC9A4A" stroke="#7A8A99"/><path d="M1.5 22 V7 L7 1.5 H88.5" fill="none" stroke="#fff" stroke-opacity="0.85"/></svg><i style="left:6.1px;letter-spacing:0.217px">Information</i></div>
<div class="tab abs" style="left:101px;top:96px;width:83px;height:22px"><svg width="83" height="22" viewBox="0 0 83 22"><path d="M0.5 22 V6.5 L6.5 0.5 H82.5 V22" fill="#FC9A4A" stroke="#7A8A99"/><path d="M1.5 22 V7 L7 1.5 H81.5" fill="none" stroke="#fff" stroke-opacity="0.85"/></svg><i style="left:5.4px;letter-spacing:0.555px">Customer</i></div>
<div class="tab abs" style="left:183px;top:96px;width:77px;height:22px"><svg width="77" height="22" viewBox="0 0 77 22"><path d="M0.5 22 V6.5 L6.5 0.5 H76.5 V22" fill="#FC9A4A" stroke="#7A8A99"/><path d="M1.5 22 V7 L7 1.5 H75.5" fill="none" stroke="#fff" stroke-opacity="0.85"/></svg><i style="left:6.2px;letter-spacing:0.121px">Contacts</i></div>
<div class="tab abs" style="left:259px;top:96px;width:58px;height:22px"><svg width="58" height="22" viewBox="0 0 58 22"><path d="M0.5 22 V6.5 L6.5 0.5 H57.5 V22" fill="#FC9A4A" stroke="#7A8A99"/><path d="M1.5 22 V7 L7 1.5 H56.5" fill="none" stroke="#fff" stroke-opacity="0.85"/></svg><i style="left:6.2px;letter-spacing:-0.246px">Event</i></div>
<div class="tab abs" style="left:316px;top:96px;width:61px;height:22px"><svg width="61" height="22" viewBox="0 0 61 22"><path d="M0.5 22 V6.5 L6.5 0.5 H60.5 V22" fill="#FC9A4A" stroke="#7A8A99"/><path d="M1.5 22 V7 L7 1.5 H59.5" fill="none" stroke="#fff" stroke-opacity="0.85"/></svg><i style="left:6.1px;letter-spacing:0.263px">Dates</i></div>
<div class="tab abs" style="left:376px;top:96px;width:87px;height:22px"><svg width="87" height="22" viewBox="0 0 87 22"><path d="M0.5 22 V6.5 L6.5 0.5 H86.5 V22" fill="#FC9A4A" stroke="#7A8A99"/><path d="M1.5 22 V7 L7 1.5 H85.5" fill="none" stroke="#fff" stroke-opacity="0.85"/></svg><i style="left:5.6px;letter-spacing:0.358px">Schedules</i></div>
<div class="tab abs" style="left:462px;top:96px;width:77px;height:22px"><svg width="77" height="22" viewBox="0 0 77 22"><path d="M0.5 22 V6.5 L6.5 0.5 H76.5 V22" fill="#FC9A4A" stroke="#7A8A99"/><path d="M1.5 22 V7 L7 1.5 H75.5" fill="none" stroke="#fff" stroke-opacity="0.85"/></svg><i style="left:5.7px;letter-spacing:0.285px">Shipping</i></div>
<div class="tab abs" style="left:538px;top:96px;width:65px;height:22px"><svg width="65" height="22" viewBox="0 0 65 22"><path d="M0.5 22 V6.5 L6.5 0.5 H64.5 V22" fill="#FC9A4A" stroke="#7A8A99"/><path d="M1.5 22 V7 L7 1.5 H63.5" fill="none" stroke="#fff" stroke-opacity="0.85"/></svg><i style="left:5.7px;letter-spacing:0.216px">Return</i></div>
<div class="tab abs" style="left:602px;top:96px;width:76px;height:22px"><svg width="76" height="22" viewBox="0 0 76 22"><path d="M0.5 22 V6.5 L6.5 0.5 H75.5 V22" fill="#FC9A4A" stroke="#7A8A99"/><path d="M1.5 22 V7 L7 1.5 H74.5" fill="none" stroke="#fff" stroke-opacity="0.85"/></svg><i style="left:5.7px;letter-spacing:0.207px">Payment</i></div>
<div class="tab abs" style="left:743px;top:96px;width:54px;height:22px"><svg width="54" height="22" viewBox="0 0 54 22"><path d="M0.5 22 V6.5 L6.5 0.5 H53.5 V22" fill="#FC9A4A" stroke="#7A8A99"/><path d="M1.5 22 V7 L7 1.5 H52.5" fill="none" stroke="#fff" stroke-opacity="0.85"/></svg><i style="left:6.2px;letter-spacing:0.475px">Cost</i></div>
<div class="tab abs" style="left:796px;top:96px;width:80px;height:22px"><svg width="80" height="22" viewBox="0 0 80 22"><path d="M0.5 22 V6.5 L6.5 0.5 H79.5 V22" fill="#FC9A4A" stroke="#7A8A99"/><path d="M1.5 22 V7 L7 1.5 H78.5" fill="none" stroke="#fff" stroke-opacity="0.85"/></svg><i style="left:5.9px;letter-spacing:0.196px">Sub Total</i></div>
<div class="tab abs" style="left:875px;top:96px;width:63px;height:22px"><svg width="63" height="22" viewBox="0 0 63 22"><path d="M0.5 22 V6.5 L6.5 0.5 H62.5 V22" fill="#FC9A4A" stroke="#7A8A99"/><path d="M1.5 22 V7 L7 1.5 H61.5" fill="none" stroke="#fff" stroke-opacity="0.85"/></svg><i style="left:5.5px;letter-spacing:0.136px">Status</i></div>
<div class="tab abs" style="left:937px;top:96px;width:106px;height:22px"><svg width="106" height="22" viewBox="0 0 106 22"><path d="M0.5 22 V6.5 L6.5 0.5 H105.5 V22" fill="#FC9A4A" stroke="#7A8A99"/><path d="M1.5 22 V7 L7 1.5 H104.5" fill="none" stroke="#fff" stroke-opacity="0.85"/></svg><i style="left:5.6px;letter-spacing:0.229px">Flat Discounts</i></div>
<div class="tab abs" style="left:678px;top:96px;width:66px;height:22px"><svg width="66" height="22" viewBox="0 0 66 22"><path d="M0.5 22 V6.5 L6.5 0.5 H65.5 V22" fill="#C44D2D" stroke="#5b7ec8"/><path d="M1.5 22 V7 L7 1.5 H64.5" fill="none" stroke="#fff" stroke-opacity="0.95"/></svg><b style="left:4.6px;letter-spacing:-0.27px">Default</b></div><div style="left:679px;top:118px;width:64px;height:2px;background:#C8DDF2"></div>
<div class="panel abs" style="left:8px;top:356px;width:1069px;height:315px"><div></div></div>
<div class="tab abs" style="left:76px;top:334px;width:59px;height:22px"><svg width="59" height="22" viewBox="0 0 59 22"><path d="M0.5 22 V6.5 L6.5 0.5 H58.5 V22" fill="#FC9A4A" stroke="#7A8A99"/><path d="M1.5 22 V7 L7 1.5 H57.5" fill="none" stroke="#fff" stroke-opacity="0.85"/></svg><i style="left:6.2px">Labor</i></div>
<div class="tab abs" style="left:10px;top:334px;width:67px;height:22px"><svg width="67" height="22" viewBox="0 0 67 22"><path d="M0.5 22 V6.5 L6.5 0.5 H66.5 V22" fill="#C44D2D" stroke="#5b7ec8"/><path d="M1.5 22 V7 L7 1.5 H65.5" fill="none" stroke="#fff" stroke-opacity="0.95"/></svg><b style="left:5.5px;letter-spacing:0px">Item(s)</b></div><div style="left:11px;top:356px;width:65px;height:2px;background:#C8DDF2"></div>
<div class="lbl" style="left:45px;top:369px">Search :</div>
<div class="lbl" style="left:120px;top:369px">Asset</div>
<div class="fld" style="left:162px;top:365px;width:120px;height:24px"></div>
<div class="caret" style="left:163px;top:367px;height:20px"></div>
<div class="lbl" style="left:362px;top:369px">Product</div>
<div class="fld" style="left:412px;top:364px;width:195px;height:25px"></div>
<div class="lbl" style="left:625px;top:369px">Qty</div>
<div class="fld" style="left:647px;top:365px;width:40px;height:24px"><span class="ft">1</span></div>
<div class="cb " style="left:707px;top:371px"></div>
<div class="lbl" style="left:724px;top:371px;letter-spacing:0.163px">Update existing lines</div>
<div style="left:10px;top:393px;width:1063px;height:1px;background:#a0a0a0"></div>
<div style="left:10px;top:395px;width:1063px;height:1px;background:#a0a0a0"></div>
<div class="sp abs" style="left:12px;top:397px;width:1059px;height:268px">
<div class="thbg" style="left:0;top:0;width:1100px;height:20px"></div>
<div class="th" style="left:0px;top:0;width:14px">T</div>
<div class="th" style="left:15px;top:0;width:14px">C</div>
<div class="th" style="left:30px;top:0;width:14px">X</div>
<div class="th" style="left:45px;top:0;width:19px">L</div>
<div class="th" style="left:65px;top:0;width:74px;letter-spacing:0.2px">Status</div>
<div class="th" style="left:140px;top:0;width:44px">Action</div>
<div class="th" style="left:185px;top:0;width:99px">Product ID</div>
<div class="th" style="left:285px;top:0;width:155px;letter-spacing:0.3px">Description</div>
<div class="th" style="left:441px;top:0;width:54px;letter-spacing:0.15px">Duration</div>
<div class="th" style="left:496px;top:0;width:29px">Qty</div>
<div class="th" style="left:526px;top:0;width:39px">Unit</div>
<div class="th" style="left:566px;top:0;width:54px;letter-spacing:0.5px">Discount</div>
<div class="th" style="left:621px;top:0;width:59px;letter-spacing:0.12px">Unit Price</div>
<div class="th" style="left:681px;top:0;width:59px">Net Each</div>
<div class="th" style="left:741px;top:0;width:74px">Amount</div>
<div class="th" style="left:816px;top:0;width:104px;letter-spacing:0.15px">Pricing ID</div>
<div class="th" style="left:921px;top:0;width:59px;letter-spacing:0.35px">Net Disc</div>
<div class="th" style="left:981px;top:0;width:121px">Start Date</div>
<div class="tr" style="left:0;top:20px;width:1100px"></div>
<div class="td" style="left:0px;top:20px;width:15px"><div class="cb tc ck" style="left:1px;top:3px"><svg width="10" height="10" viewBox="0 0 10 10"><path d="M3 4.2V9" stroke="#1a1a1a" stroke-width="2"/><path d="M3.4 8.4L8.8 2.4" stroke="#1a1a1a" stroke-width="1.4"/></svg></div></div>
<div class="td" style="left:15px;top:20px;width:15px"><div class="cb tc" style="left:1px;top:3px"></div></div>
<div class="td" style="left:30px;top:20px;width:15px"><div class="cb tc" style="left:1px;top:3px"></div></div>
<div class="td" style="left:45px;top:20px;width:20px"><div class="cb tc" style="left:3px;top:3px"></div></div>
<div class="td" style="left:65px;top:20px;width:75px;text-align:left;letter-spacing:0.18px;">Reserved</div>
<div class="td" style="left:140px;top:20px;width:45px;text-align:left;">Rent</div>
<div class="td" style="left:185px;top:20px;width:100px;text-align:left;letter-spacing:-0.25px;">MI BANDS</div>
<div class="td" style="left:285px;top:20px;width:156px;text-align:left;padding-left:7px;letter-spacing:0.25px;">MI Bands - SI</div>
<div class="td" style="left:441px;top:20px;width:55px;text-align:left;letter-spacing:0.5px;">21d</div>
<div class="td" style="left:496px;top:20px;width:30px;text-align:right;">1</div>
<div class="td" style="left:526px;top:20px;width:40px;text-align:left;">Week</div>
<div class="td" style="left:566px;top:20px;width:55px;text-align:right;letter-spacing:0.3px;">0.00</div>
<div class="td" style="left:621px;top:20px;width:60px;text-align:right;letter-spacing:0.3px;">100.00</div>
<div class="td" style="left:681px;top:20px;width:60px;text-align:right;letter-spacing:0.3px;">100.00</div>
<div class="td" style="left:741px;top:20px;width:75px;text-align:right;letter-spacing:0.3px;">260.00</div>
<div class="td" style="left:816px;top:20px;width:105px;text-align:left;letter-spacing:0.05px;">GDP#1</div>
<div class="td" style="left:921px;top:20px;width:60px;text-align:right;letter-spacing:0.3px;">0.00</div>
<div class="td" style="left:981px;top:20px;width:122px;text-align:left;padding-left:3px;letter-spacing:.25px;">02/25/2017 09:00</div>
<div class="tr" style="left:0;top:39px;width:1100px"></div>
<div class="td" style="left:0px;top:39px;width:15px"><div class="cb tc ck" style="left:1px;top:3px"><svg width="10" height="10" viewBox="0 0 10 10"><path d="M3 4.2V9" stroke="#1a1a1a" stroke-width="2"/><path d="M3.4 8.4L8.8 2.4" stroke="#1a1a1a" stroke-width="1.4"/></svg></div></div>
<div class="td" style="left:15px;top:39px;width:15px"><div class="cb tc" style="left:1px;top:3px"></div></div>
<div class="td" style="left:30px;top:39px;width:15px"><div class="cb tc" style="left:1px;top:3px"></div></div>
<div class="td" style="left:45px;top:39px;width:20px"><div class="cb tc" style="left:3px;top:3px"></div></div>
<div class="td" style="left:65px;top:39px;width:75px;text-align:left;letter-spacing:0.18px;">Reserved</div>
<div class="td" style="left:140px;top:39px;width:45px;text-align:left;">Rent</div>
<div class="td" style="left:185px;top:39px;width:100px;text-align:left;letter-spacing:-0.15px;">REDMI HEADP...</div>
<div class="td" style="left:285px;top:39px;width:156px;text-align:left;padding-left:7px;letter-spacing:0.25px;">Redmi HeadPhones - NS</div>
<div class="td" style="left:441px;top:39px;width:55px;text-align:left;">14d</div>
<div class="td" style="left:496px;top:39px;width:30px;text-align:right;">1</div>
<div class="td" style="left:526px;top:39px;width:40px;text-align:left;">Week</div>
<div class="td" style="left:566px;top:39px;width:55px;text-align:right;letter-spacing:0.3px;">0.00</div>
<div class="td" style="left:621px;top:39px;width:60px;text-align:right;letter-spacing:0.3px;">100.00</div>
<div class="td" style="left:681px;top:39px;width:60px;text-align:right;letter-spacing:0.3px;">100.00</div>
<div class="td" style="left:741px;top:39px;width:75px;text-align:right;letter-spacing:0.3px;">180.00</div>
<div class="td" style="left:816px;top:39px;width:105px;text-align:left;letter-spacing:0.05px;">GDP#1</div>
<div class="td" style="left:921px;top:39px;width:60px;text-align:right;letter-spacing:0.3px;">0.00</div>
<div class="td" style="left:981px;top:39px;width:122px;text-align:left;padding-left:3px;letter-spacing:.25px;">02/25/2017 09:00</div>
</div>
<div class="sbar abs" style="left:13px;top:647px;width:1057px;height:17px"><div class="sbtn" style="left:0"><svg width="15" height="15" viewBox="0 0 15 15"><path d="M10 3V12L5.2 7.5Z" fill="#222"/></svg></div><div class="thumb" style="left:15px;width:513px"><svg width="8" height="10" viewBox="0 0 8 10" style="position:absolute;left:253px;top:3px"><path d="M1.5 0V9M3.5 0V9M5.5 0V9" stroke="#8d7d95"/><path d="M2.5 1V10M4.5 1V10M6.5 1V10" stroke="#f6d3bb"/></svg></div><div class="sbtn r" style="right:0"><svg width="15" height="15" viewBox="0 0 15 15"><path d="M5 3V12L9.800 7.500Z" fill="#222"/></svg></div></div>
<div class="blbl" style="left:70px;top:678px">Items</div>
<div class="bf" style="left:120px;top:673px;width:100px">440.00</div>
<div class="blbl" style="left:235px;top:678px">Labor</div>
<div class="bf" style="left:287px;top:673px;width:100px"></div>
<div class="blbl" style="left:446px;top:678px">Sub Total</div>
<div class="bf" style="left:525px;top:673px;width:100px">440.00</div>
<div class="blbl" style="left:636px;top:678px">Tax</div>
<div class="bf" style="left:670px;top:673px;width:100px"></div>
<div class="totl" style="left:813px;top:673px;width:89px;height:23px">Total</div>
<div class="bf" style="left:906px;top:673px;width:100px">440.00</div>
<div class="status" style="left:9px;top:708px;width:1067px;height:24px"></div>
</div>
</body>
</html>
